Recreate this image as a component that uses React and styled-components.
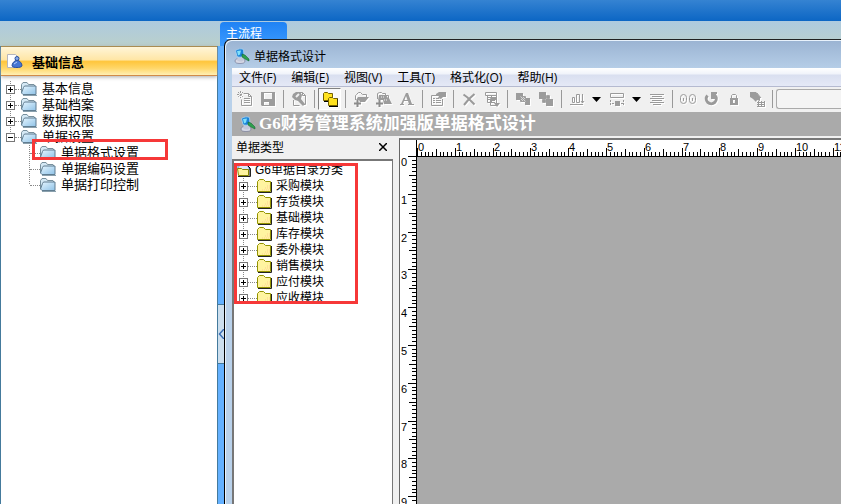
import React, { useEffect, useState } from "react";
import styled, { createGlobalStyle } from "styled-components";

const GlobalStyle = createGlobalStyle`
  * {
    box-sizing: border-box;
  }
  body {
    margin: 0;
    font-family: "Liberation Sans", "Noto Sans CJK SC", sans-serif;
    font-size: 12px;
    color: #000;
  }
  button {
    font: inherit;
    color: inherit;
    border: 0;
    padding: 0;
    background: none;
  }
  ul {
    list-style: none;
    margin: 0;
    padding: 0;
  }
`;

const Page = styled.div`
  height: 100vh;
  display: flex;
  flex-direction: column;
  overflow: hidden;
`;

const TopBar = styled.header`
  height: 21px;
  flex: none;
  background: linear-gradient(#3583d2, #0c66c4);
`;

const Body = styled.div`
  flex: 1;
  min-height: 0;
  display: flex;
  background: linear-gradient(#aecadf, #bad0cc 25px);
`;

const Sidebar = styled.nav`
  width: 218px;
  flex: none;
  margin-top: 25px;
  background: #fff;
  border-left: 1px solid #447a9c;
  border-right: 1px solid #447a9c;
`;

const SidebarHeader = styled.h2`
  display: flex;
  align-items: center;
  gap: 9px;
  height: 30px;
  margin: 0;
  padding-left: 6px;
  font-size: 13px;
  font-weight: 700;
  border-top: 1px solid #a98c52;
  border-bottom: 1px solid #d18b48;
  background: linear-gradient(#fff5d8, #ffe6a6 45%, #ffc63d 52%, #ffd667 75%, #ffefb4);
  box-shadow: 0 1px 4px #aaa;
`;

const SidebarTree = styled.div`
  position: relative;
  padding: 5px 0 0 5px;
`;

const Row = styled.div`
  display: flex;
  align-items: center;
  height: 16px;
  padding-left: ${(props) => props.indent || "0"};
`;

const Expander = styled.button`
  width: 9px;
  height: 9px;
  flex: none;
  border: 1px solid #777;
  background: linear-gradient(#000, #000) center / 5px 1px no-repeat,
    linear-gradient(#000, #000) center / 1px ${(props) => (props.open ? "0" : "5px")} no-repeat, #fff;
`;

const Dots = styled.span`
  width: ${(props) => props.length};
  flex: none;
  border-top: 1px dotted #888;
`;

const Branch = styled.ul`
  background: repeating-linear-gradient(#888 0 1px, transparent 1px 2px) ${(props) => props.line} 0 / 1px
    calc(100% - 8px) no-repeat;
`;

const NavLabel = styled.button`
  margin-left: 5px;
  font-size: 13px;
  line-height: 16px;
  white-space: nowrap;
`;

const TypeLabel = styled.button`
  margin-left: 3px;
  line-height: 16px;
  white-space: nowrap;
`;

const Highlight = styled.div`
  position: absolute;
  pointer-events: none;
  border: 3px solid #f63838;
  left: ${(props) => props.left};
  top: ${(props) => props.top};
  width: ${(props) => props.width};
  height: ${(props) => props.height};
`;

const Splitter = styled.div`
  width: 6px;
  flex: none;
  margin-top: 25px;
  padding-top: 258px;
  background: #64b1ff;
`;

const Collapse = styled.button`
  display: flex;
  align-items: center;
  width: 6px;
  height: 60px;
  background: #cddfee;
  border-top: 1px solid #447a9c;
  border-bottom: 1px solid #447a9c;
`;

const Main = styled.main`
  flex: 1;
  min-width: 0;
  display: flex;
  flex-direction: column;
`;

const TabStrip = styled.div`
  height: 18px;
  flex: none;
  padding-top: 1px;
  margin-left: -4px;
`;

const Tab = styled.button`
  display: block;
  width: 67px;
  height: 24px;
  padding-left: 6px;
  text-align: left;
  line-height: 22px;
  color: #fff;
  background: linear-gradient(#1f82f4, #3b9aff);
  border-radius: 4px 4px 0 0;
`;

const Frame = styled.section`
  position: relative;
  flex: 1;
  min-height: 0;
  display: flex;
  flex-direction: column;
  padding-left: 7px;
  overflow: hidden;
  border-left: 1px solid #000;
  border-top: 1px solid #222;
  border-radius: 7px 0 0 0;
  background: linear-gradient(#9ab3d2, #b9d1ea 32px);
  box-shadow: inset 1px 1px 0 #e8f2fc;
`;

const TitleBar = styled.div`
  display: flex;
  align-items: center;
  gap: 4px;
  height: 28px;
  flex: none;
  padding: 3px 0 0 2px;
`;

const MenuBar = styled.div`
  display: flex;
  gap: 15px;
  height: 19px;
  flex: none;
  padding-left: 7px;
  white-space: nowrap;
  font-family: "Open Sans", "Noto Sans CJK SC", sans-serif;
  background: linear-gradient(#fff, #f0f3fa 6px, #d9dff0 7px, #e5e9f6);
  border-bottom: 1px solid #b5bad0;
`;

const Toolbar = styled.div`
  display: flex;
  align-items: center;
  height: 25px;
  flex: none;
  padding: 0 0 1px 1px;
  background: #f0f0f0;
`;

const Tool = styled.button`
  display: flex;
  align-items: center;
  justify-content: center;
  width: ${(props) => (props.narrow ? "17px" : "23px")};
  height: 22px;
  flex: none;
  border: 1px solid;
  border-color: ${(props) => (props.pressed ? "#808080 #fff #fff #808080" : "transparent")};
  background: ${(props) => (props.pressed ? "#f8f8f8" : "none")};
`;

const Separator = styled.span`
  width: 8px;
  height: 18px;
  flex: none;
  background: linear-gradient(#999, #999) 4px 0 / 1px 100% no-repeat;
`;

const ToolInput = styled.input`
  flex: 1;
  min-width: 80px;
  height: 20px;
  border: 1px solid #aaa;
  border-right: 0;
  border-radius: 3px 0 0 3px;
  background: #f4f4f4;
`;

const Banner = styled.h1`
  display: flex;
  align-items: center;
  gap: 3px;
  height: 24px;
  flex: none;
  margin: 0;
  padding-left: 8px;
  white-space: nowrap;
  color: #fff;
  background: #aaa;
  font: 700 17px/24px "Liberation Serif", "Noto Sans CJK SC", serif;
`;

const Workspace = styled.div`
  flex: 1;
  min-height: 0;
  display: flex;
  gap: 6px;
  padding-top: 2px;
  background: #f0f0f0;
`;

const TypePane = styled.aside`
  width: 161px;
  flex: none;
  display: flex;
  flex-direction: column;
`;

const PaneHeader = styled.div`
  display: flex;
  justify-content: space-between;
  align-items: center;
  height: 21px;
  flex: none;
  padding: 0 6px 4px 4px;
`;

const PaneTree = styled.div`
  position: relative;
  flex: 1;
  padding: 1px 0 0 3px;
  background: #fff;
  border: 2px solid #777;
  border-right-width: 1px;
  border-bottom: 0;
`;

const TreeView = styled.div`
  height: 142px;
  overflow: hidden;
`;

const Designer = styled.div`
  flex: 1;
  min-width: 0;
  display: grid;
  grid-template-columns: 17px 1fr;
  grid-template-rows: 17px 1fr;
  overflow: hidden;
  border-top: 2px solid #777;
  border-left: 1px solid #666;
  background: #fff;
`;

const RulerTop = styled.div`
  margin-left: -1px;
  overflow: hidden;
  border-left: 1px solid #000;
  border-bottom: 1px solid #000;
`;

const RulerSide = styled.div`
  margin-top: -1px;
  overflow: hidden;
  border-right: 1px solid #000;
`;

const Canvas = styled.div`
  background: #aaa;
`;

const Drawing = styled.svg`
  display: block;
  flex: none;
`;

const Glyph = styled.svg`
  display: block;
  flex: none;
  filter: drop-shadow(1px 1px 0 #fff);
`;

const menus = ["文件(F)", "编辑(E)", "视图(V)", "工具(T)", "格式化(O)", "帮助(H)"];
const groups = ["基本信息", "基础档案", "数据权限", "单据设置"];
const settings = ["单据格式设置", "单据编码设置", "单据打印控制"];
const modules = ["采购模块", "存货模块", "基础模块", "库存模块", "委外模块", "销售模块", "应付模块", "应收模块"];

const line = { fill: "none", stroke: "#9a9a9a" };
const solid = { fill: "#9c9c9c" };

const glyphs = {
  new: (
    <g {...line}>
      <path d="M6.5 2.5h5l3 3v9h-10v-6M11.5 2.5v3h3M7 7.5h6M7 9.5h6M7 11.5h6" />
      <path d="M0 3.5h6M3.5 0v7M1 1l5 5M6 1l-5 5" strokeDasharray="2 1" />
    </g>
  ),
  save: <path {...solid} fillRule="evenodd" d="M1 1h14v14H2l-1-1zM4 2v6h8V2zM4 11v3h5v-3z" />,
  preview: (
    <g {...line}>
      <path d="M7.5 1.5h4l3 3v9h-2M2.5 9v5.500h6M11.5 1.5v3h3" />
      <path {...solid} stroke="none" d="M2 3l3-2h4l2 3-1 4 4 5-2 2-5-5-3-1-3-3z" />
      <path d="M5 6l3-3" stroke="#f0f0f0" strokeWidth="2" />
    </g>
  ),
  folders: (
    <g fill="#ffe21e" stroke="#756200">
      <path d="M1.5 9.5v-7l1-1h3l1 1h4v7z" />
      <path d="M2 10.5h5" stroke="#000" fill="none" />
      <path d="M6.5 14.5v-7l1-1h3l1 1h4v7z" />
      <path d="M7 15.5h9v-8" stroke="#000" fill="none" />
    </g>
  ),
  addFolder: (
    <g>
      <path {...line} d="M2.500 9V4.500l1-1 2-2h2l2 2h4v3" />
      <path {...solid} d="M5 6h11l-4 5H7l-1-2H3z" />
      <path d="M1 12.500h7M4.500 9v7" stroke="#8c8c8c" strokeWidth="2" />
    </g>
  ),
  addFolders: (
    <g>
      <path {...line} d="M1.500 8V2.500l2-1h2l1 1h3v2h3v3" />
      <path {...solid} d="M3 4h7l2 3h1l3 6H8l-1-4H2z" />
      <path d="M5 6h4M8 9h4" stroke="#f0f0f0" strokeDasharray="1 1" />
      <path d="M0 12.500h7M3.500 9v7" stroke="#8c8c8c" strokeWidth="2" />
    </g>
  ),
  font: <path {...solid} fillRule="evenodd" d="M7 2h2l4 11h2v1H9v-1h1l-1-3H5l-1 3h1v1H1v-1h1zM7 5L5.500 9h3z" />,
  properties: (
    <g>
      <path {...line} d="M8 4.500H1.500v10h11V8M3 7.500h2M6 7.500h3M3 9.500h2M6 9.500h5M3 11.500h2M6 11.500h5" />
      <path {...solid} d="M6 3l3-2h7v5h-3l-2 2-3-1 1-2H6z" />
    </g>
  ),
  remove: <path {...line} strokeWidth="2" d="M2.500 3.500l4 3 7 7M13.500 3L8 8l-5 6" />,
  sheet: (
    <g>
      <path {...line} d="M1.500 1.500h11v3h-11zM3.500 4.500v7h5M3 6.500h9M3 8.500h9M7.500 4v7M12.500 4v8" />
      <path {...line} d="M6.500 7.500h6v7h-6zM8 9.500h3M8 11.500h3" />
      <path {...solid} d="M10 12h6l-3 4z" />
    </g>
  ),
  front: (
    <g {...solid}>
      <path d="M1 2h7v3H5v4H1zM8 11h2v3h5V7h-4v4z" />
      <path d="M5.500 5.500h5v5h-5z" fill="#d8d8d8" stroke="#a0a0a0" />
      <path d="M6 7.500h4M7.500 6v4M6 9.500h4M9.500 6v4" stroke="#a0a0a0" strokeDasharray="1 1" />
    </g>
  ),
  back: (
    <g>
      <path {...solid} d="M1 1h7v7H1zM8 8h7v7H8z" />
      <path d="M8 4h4v4H8zM4 8h4v4H4z" fill="#b9b9b9" />
      <path d="M8 6h4M10 4v4M4 10h4M6 8v4" stroke="#909090" />
    </g>
  ),
  align: <path {...line} d="M1 13.500h13M3.500 6.500h2v5h-2zM7.500 3.500h3v8h-3zM13.500 3v9M12 10l1.500 2L15 10" />,
  spacing: (
    <g>
      <path {...line} d="M1.500 2.500h13v4h-13z" />
      <path {...line} d="M1.500 9v6M14.500 9v6M3 12.500h11" strokeDasharray="2 1" />
      <path {...solid} d="M6 10h5v5H6z" />
    </g>
  ),
  lines: <path {...line} d="M1 3.500h14M3 5.500h10M1 7.500h14M3 9.500h10M1 11.500h14M4 13.500h8" />,
  zeros: (
    <g {...line}>
      <rect x="0.500" y="3.500" width="6" height="9" rx="3" />
      <rect x="9.500" y="3.500" width="6" height="9" rx="3" />
      <path d="M3.500 7v3M12.500 7v3" />
    </g>
  ),
  refresh: (
    <g>
      <path {...line} strokeWidth="3" d="M4.500 4.500a5 5 0 1 0 7.500 0" />
      <path {...solid} d="M8 1h6v2h-1v5H8z" />
    </g>
  ),
  lock: (
    <g>
      <path {...solid} fillRule="evenodd" d="M4 7h8v7H4zM7 9v3h2V9z" />
      <path {...line} d="M5.500 7V4.500l1-1h3l1 1V7" />
    </g>
  ),
  pointer: (
    <g>
      <path {...solid} d="M1 1h6l4 5v4l-3-1-1 2-3-3-3-2z" />
      <path {...line} d="M8 11.500h8M8 13.500h8M8 15.500h8M9.500 10v6M12.500 10v6M15.500 10v6M8 2l4 5" />
    </g>
  ),
};

const tools = [
  ["new", "新建"],
  ["save", "保存"],
  null,
  ["preview", "预览"],
  null,
  ["folders", "目录"],
  null,
  ["addFolder", "增加"],
  ["addFolders", "批量增加"],
  ["font", "字体"],
  null,
  ["properties", "属性"],
  null,
  ["remove", "删除"],
  ["sheet", "表格"],
  null,
  ["front", "置前"],
  ["back", "置后"],
  null,
  ["align", "对齐"],
  ["arrow", "对齐选项"],
  ["spacing", "间距"],
  ["arrow", "间距选项"],
  ["lines", "居中"],
  null,
  ["zeros", "数字"],
  ["refresh", "刷新"],
  ["lock", "锁定"],
  ["pointer", "选择"],
  null,
];

function BlueFolder() {
  return (
    <Drawing width="16" height="14" viewBox="0 0 16 14" aria-hidden="true">
      <defs>
        <linearGradient id="blue" x2="1" y2="1">
          <stop stopColor="#e6f6ff" />
          <stop offset="1" stopColor="#8fc2e7" />
        </linearGradient>
      </defs>
      <path d="M.5 11V2.500L2 .5h4l1.500 2H13l1 2" fill="#d4e8f4" stroke="#78909d" />
      <path d="M2.500 5.500l1-1.500h11.500v8.500H2L.5 11z" fill="url(#blue)" stroke="#607d91" />
      <path d="M2 13.500h14" stroke="#8aa0ad" />
    </Drawing>
  );
}

function YellowFolder() {
  return (
    <Drawing width="16" height="14" viewBox="0 0 16 14" aria-hidden="true">
      <path d="M.5 12.500v-10l2-2h4l2 2h5v10z" fill="#fff4a0" stroke="#949400" />
      <path d="M5 11h8M8 9h5M10 7h3" stroke="#ffce91" strokeDasharray="1 1" />
      <path d="M1 13.500h13.500V3" stroke="#222" fill="none" />
    </Drawing>
  );
}

function RootFolder() {
  return (
    <Drawing width="15" height="14" viewBox="0 0 15 14" aria-hidden="true">
      <path d="M1 7V2l2 1 2-3 3 1 3 2 2 4" fill="#dce9fa" stroke="#4a7fc0" />
      <path d="M9 1l4 4v8" fill="none" stroke="#000" />
      <path d="M.5 5.500h4l1 1h6v6h-10z" fill="#fff4a0" stroke="#858500" />
      <path d="M1 13.500h12.500v-8" fill="none" stroke="#222" />
    </Drawing>
  );
}

function AppIcon() {
  return (
    <Drawing width="16" height="16" viewBox="0 0 16 16" aria-hidden="true">
      <ellipse cx="6" cy="13" rx="5" ry="2.500" fill="#d6d9e6" stroke="#6c718e" strokeWidth=".6" />
      <path d="M4 8h5l1 4c-2 2-5 2-7 0z" fill="#c3c8da" />
      <path d="M1.500 2.500c3-2 6-2 8-1l.5 6c-2 2-5 2-7 1z" fill="#1b83d8" stroke="#a9d4f2" strokeWidth=".8" />
      <path d="M3 3l4-.5-1 4-2 1z" fill="#7fe0fb" />
      <path d="M8 6l3 1 4 4v2l-4-2-3-2z" fill="#2da04c" stroke="#0f5a2c" strokeWidth=".5" />
    </Drawing>
  );
}

function UserIcon() {
  return (
    <Drawing width="16" height="16" viewBox="0 0 16 16" aria-hidden="true">
      <path d="M.5 1.500h8l2 2v11H.5z" fill="#fff" stroke="#b5b5bd" />
      <path d="M10 7c3 1 5 3 5 6-1 2-9 2-10 0 0-3 2-5 5-6z" fill="#4776d2" stroke="#2a4f9c" />
      <circle cx="10" cy="5.500" r="2" fill="#89abea" stroke="#2a4f9c" />
      <path d="M7 11l3-2" stroke="#b8d0ff" />
    </Drawing>
  );
}

// 96 dpi, one label per centimetre
const tickAt = (mm) => Math.round((mm * 96) / 25.4);

function useRulerSpan() {
  const measure = () => ({
    across: Math.ceil((window.innerWidth - 417) / 37.8),
    down: Math.ceil((window.innerHeight - 157) / 37.8),
  });
  const [span, setSpan] = useState(measure);
  useEffect(() => {
    const onResize = () => setSpan(measure());
    window.addEventListener("resize", onResize);
    return () => window.removeEventListener("resize", onResize);
  }, []);
  return span;
}

function Ruler({ vertical, count }) {
  const ticks = Array.from({ length: count * 10 }, (_, mm) => {
    const pos = tickAt(mm) + 0.5;
    const size = mm % 10 === 0 ? 8 : mm % 5 === 0 ? 7 : 4;
    return vertical ? `M${16 - size} ${pos}H16` : `M${pos} ${16 - size}V16`;
  });
  const length = tickAt(count * 10);
  return (
    <Drawing width={vertical ? 16 : length} height={vertical ? length : 16} aria-hidden="true">
      <path d={ticks.join("")} stroke="#000" />
      {Array.from({ length: count }, (_, cm) => (
        <text
          key={cm}
          x={vertical ? 1 : tickAt(cm * 10) + 1}
          y={vertical ? tickAt(cm * 10) + 10 : 11}
          fontSize="11"
          fontFamily="Liberation Sans, sans-serif"
        >
          {cm}
        </text>
      ))}
    </Drawing>
  );
}

function ToolButton({ name, label }) {
  if (name === "arrow") {
    return (
      <Tool narrow aria-label={label}>
        <Drawing width="9" height="5" viewBox="0 0 9 5">
          <path d="M0 0h9L4.500 5z" />
        </Drawing>
      </Tool>
    );
  }
  return (
    <Tool pressed={name === "folders"} aria-label={label}>
      <Glyph width="16" height="16" viewBox="0 0 16 16">
        {glyphs[name]}
      </Glyph>
    </Tool>
  );
}

function Navigation() {
  return (
    <Sidebar>
      <SidebarHeader>
        <UserIcon />
        基础信息
      </SidebarHeader>
      <SidebarTree>
        <Branch line="4px">
          {groups.map((name, i) => (
            <li key={name}>
              <Row>
                <Expander open={i === 3} aria-label={name} />
                <Dots length="6px" />
                <BlueFolder />
                <NavLabel>{name}</NavLabel>
              </Row>
            </li>
          ))}
        </Branch>
        <Branch line="23px">
          {settings.map((name) => (
            <li key={name}>
              <Row indent="24px">
                <Dots length="10px" />
                <BlueFolder />
                <NavLabel>{name}</NavLabel>
              </Row>
            </li>
          ))}
        </Branch>
        <Highlight left="31px" top="63px" width="136px" height="21px" />
      </SidebarTree>
    </Sidebar>
  );
}

function TypeTree() {
  return (
    <TypePane>
      <PaneHeader>
        单据类型
        <button aria-label="关闭">
          <Drawing width="8" height="8" viewBox="0 0 8 8">
            <path d="M0 0l8 8M8 0L0 8" stroke="#000" strokeWidth="1.500" />
          </Drawing>
        </button>
      </PaneHeader>
      <PaneTree>
        <TreeView>
          <Row>
            <RootFolder />
            <TypeLabel>G6单据目录分类</TypeLabel>
          </Row>
          <Branch line="6px">
            {modules.map((name) => (
              <li key={name}>
                <Row indent="2px">
                  <Expander aria-label={name} />
                  <Dots length="9px" />
                  <YellowFolder />
                  <TypeLabel>{name}</TypeLabel>
                </Row>
              </li>
            ))}
          </Branch>
        </TreeView>
        <Highlight left="0" top="2px" width="124px" height="141px" />
      </PaneTree>
    </TypePane>
  );
}

export default function App() {
  const span = useRulerSpan();

  return (
    <Page>
      <GlobalStyle />
      <TopBar />
      <Body>
        <Navigation />
        <Splitter>
          <Collapse aria-label="收起">
            <Drawing width="6" height="10" viewBox="0 0 6 10">
              <path d="M6 0L1.500 5 6 10" fill="none" stroke="#3d6fb5" strokeWidth="1.500" />
            </Drawing>
          </Collapse>
        </Splitter>
        <Main>
          <TabStrip>
            <Tab>主流程</Tab>
          </TabStrip>
          <Frame>
            <TitleBar>
              <AppIcon />
              单据格式设计
            </TitleBar>
            <MenuBar>
              {menus.map((menu) => (
                <button key={menu}>{menu}</button>
              ))}
            </MenuBar>
            <Toolbar>
              {tools.map((tool, i) =>
                tool ? <ToolButton key={i} name={tool[0]} label={tool[1]} /> : <Separator key={i} />
              )}
              <ToolInput aria-label="名称" />
            </Toolbar>
            <Banner>
              <AppIcon />
              G6财务管理系统加强版单据格式设计
            </Banner>
            <Workspace>
              <TypeTree />
              <Designer>
                <span />
                <RulerTop>
                  <Ruler count={span.across} />
                </RulerTop>
                <RulerSide>
                  <Ruler vertical count={span.down} />
                </RulerSide>
                <Canvas />
              </Designer>
            </Workspace>
          </Frame>
        </Main>
      </Body>
    </Page>
  );
}
